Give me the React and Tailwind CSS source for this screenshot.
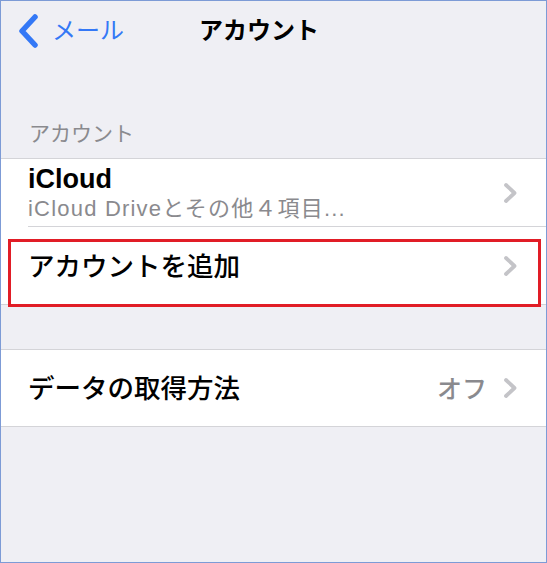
const font = { fontFamily: '"Liberation Sans", "Noto Sans CJK JP", sans-serif' };

function Chevron() {
  return (
    <svg width="15" height="22" viewBox="0 0 15 22" className="shrink-0">
      <polyline points="3,3 11.5,11 3,19" fill="none" stroke="#c4c4c8" strokeWidth="3.8" strokeLinecap="round" strokeLinejoin="round" />
    </svg>
  );
}

export default function App() {
  return (
    <div
      className="w-[547px] h-[563px] bg-[#efeff4] border border-[#7d9bd6] relative overflow-hidden"
      style={font}
    >
      {/* nav bar */}
      <div className="h-[60px] flex items-center">
        <div className="flex items-center pl-[15px] text-[#3478f6]">
          <svg width="26" height="34" viewBox="0 0 26 34">
            <polyline points="19,3 6,17 19,31" fill="none" stroke="#3478f6" strokeWidth="5.5" strokeLinecap="round" strokeLinejoin="round" />
          </svg>
          <span className="ml-[10px] text-[24px] leading-none">メール</span>
        </div>
        <div className="ml-[75px] text-[24px] font-bold text-black leading-none">アカウント</div>
      </div>

      {/* section header */}
      <div className="h-[97px] flex items-end pl-[28px] pb-[14px]">
        <span className="text-[21px] leading-none text-[#8a8a8e]">アカウント</span>
      </div>

      {/* accounts group */}
      <div className="bg-white border-y border-[#d4d4d8] relative">
        <div className="pl-[27px]">
          <div className="h-[68px] flex items-center justify-between pr-[28px] border-b border-[#d4d4d8]">
            <div className="flex flex-col">
              <span className="text-[27px] font-bold leading-[30px] text-black">iCloud</span>
              <span className="text-[22px] leading-[24px] tracking-[1.2px] text-[#8a8a8e] mt-[3px]">iCloud Driveとその他４項目...</span>
            </div>
            <Chevron />
          </div>
        </div>
        <div className="h-[77px] flex items-center justify-between pl-[27px] pr-[28px]">
          <span className="text-[26.5px] font-medium leading-none text-black mt-[4px]">アカウントを追加</span>
          <Chevron />
        </div>
        {/* red highlight frame */}
        <div className="absolute left-[7px] right-[5px] top-[80px] h-[68px] border-[3px] border-[#e11d26]" />
      </div>

      <div className="h-[44px]" />

      {/* fetch group */}
      <div className="bg-white border-y border-[#d4d4d8]">
        <div className="h-[76px] flex items-center justify-between pl-[27px] pr-[28px]">
          <span className="text-[26.5px] font-medium leading-none text-black mt-[3px]">データの取得方法</span>
          <div className="flex items-center gap-[16px]">
            <span className="text-[25px] font-medium leading-none text-[#8a8a8e] mt-[3px]">オフ</span>
            <Chevron />
          </div>
        </div>
      </div>
    </div>
  );
}
